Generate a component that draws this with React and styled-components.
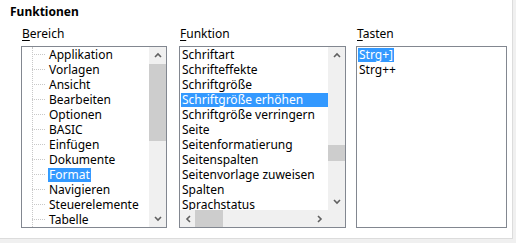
import React from 'react';
import styled, {createGlobalStyle} from 'styled-components';

const GlobalStyle = createGlobalStyle`
  html, body {
    margin: 0;
    padding: 0;
    background: #f0f0f0;
  }
  body {
    font-family: "Noto Sans", "Open Sans", sans-serif;
    font-size: 12px;
    color: #000;
  }
`;

const Panel = styled.div`
  width: 513px;
  height: 239px;
  box-sizing: border-box;
  background: #fff;
  border-right: 1px solid #dcdcdc;
  border-bottom: 1px solid #dcdcdc;
  padding: 4px 0 0 10px;
`;

const Title = styled.div`
  font-weight: bold;
  font-size: 12px;
  line-height: 16px;
`;

const Columns = styled.div`
  display: flex;
  margin: 6px 0 0 11px;
`;

const Column = styled.div`
  display: flex;
  flex-direction: column;
  width: ${p => p.width}px;
  margin-right: ${p => p.gap || 0}px;
`;

const Label = styled.div`
  line-height: 16px;
  height: 20px;
  padding-left: 1px;
  u {
    text-decoration: underline;
    text-underline-offset: 2px;
  }
`;

const Box = styled.div`
  height: 182px;
  box-sizing: border-box;
  border: 1px solid #828790;
  display: grid;
  grid-template-columns: 1fr ${p => p.vscroll ? '17px' : '0'};
  grid-template-rows: 1fr ${p => p.hscroll ? '17px' : '0'};
  overflow: hidden;
`;

const Items = styled.div`
  overflow: hidden;
  position: relative;
  padding-left: ${p => p.indent || 0}px;
`;

const Row = styled.div`
  height: 15px;
  line-height: 15px;
  white-space: nowrap;
  display: flex;
  align-items: center;
  position: relative;
`;

const ItemText = styled.span`
  background: ${p => p.selected ? '#3399ff' : 'transparent'};
  color: ${p => p.selected ? '#fff' : '#000'};
  padding: 0 1px;
  line-height: 14px;
  ${p => p.fill ? 'flex: 1;' : ''}
`;

const TreeLineV = styled.div`
  position: absolute;
  left: 10px;
  top: 0;
  bottom: 0;
  border-left: 1px dotted #c8c8c8;
`;

const TreeStub = styled.span`
  width: 13px;
  margin-left: 10px;
  margin-right: 3px;
  border-top: 1px dotted #c8c8c8;
`;

const VScroll = styled.div`
  background: #f0f0f0;
  display: flex;
  flex-direction: column;
`;

const HScroll = styled.div`
  background: #f0f0f0;
  display: flex;
  grid-column: 1;
`;

const Corner = styled.div`
  background: #f0f0f0;
`;

const Arrow = styled.div`
  width: 17px;
  height: 17px;
  flex: none;
  display: flex;
  align-items: center;
  justify-content: center;
`;

const Track = styled.div`
  flex: 1;
  position: relative;
`;

const Thumb = styled.div`
  position: absolute;
  background: #cdcdcd;
  ${p => p.horizontal
    ? `top: 0; bottom: 0; left: ${p.start}px; width: ${p.size}px;`
    : `left: 0; right: 0; top: ${p.start}px; height: ${p.size}px;`}
`;

const Chevron = ({dir}) => {
  const pts = {
    up: '1,5 4,2 7,5',
    down: '1,2 4,5 7,2',
    left: '5,1 2,4 5,7',
    right: '2,1 5,4 2,7'
  }[dir];
  const w = dir === 'up' || dir === 'down' ? 8 : 7;
  const h = dir === 'up' || dir === 'down' ? 7 : 8;
  return (
    <svg width={w} height={h} viewBox={`0 0 ${w} ${h}`}>
      <polyline points={pts} fill="none" stroke="#606060" strokeWidth="1.6"/>
    </svg>
  );
};

const bereich = ['Applikation', 'Vorlagen', 'Ansicht', 'Bearbeiten', 'Optionen', 'BASIC',
  'Einfügen', 'Dokumente', 'Format', 'Navigieren', 'Steuerelemente', 'Tabelle'];

const funktion = ['Schriftart', 'Schrifteffekte', 'Schriftgröße', 'Schriftgröße erhöhen',
  'Schriftgröße verringern', 'Seite', 'Seitenformatierung', 'Seitenspalten',
  'Seitenvorlage zuweisen', 'Spalten', 'Sprachstatus'];

const tasten = ['Strg+]', 'Strg++'];

const VerticalBar = ({start, size}) => (
  <VScroll>
    <Arrow><Chevron dir="up"/></Arrow>
    <Track><Thumb start={start} size={size}/></Track>
    <Arrow><Chevron dir="down"/></Arrow>
  </VScroll>
);

export default function App() {
  return (
    <>
      <GlobalStyle/>
      <Panel>
        <Title>Funktionen</Title>
        <Columns>
          <Column width={146} gap={12}>
            <Label><u>B</u>ereich</Label>
            <Box vscroll>
              <Items>
                <TreeLineV/>
                {bereich.map(b => (
                  <Row key={b}>
                    <TreeStub/>
                    <ItemText selected={b === 'Format'}>{b}</ItemText>
                  </Row>
                ))}
              </Items>
              <VerticalBar start={0} size={77}/>
            </Box>
          </Column>
          <Column width={167} gap={10}>
            <Label><u>F</u>unktion</Label>
            <Box vscroll hscroll>
              <Items indent={1}>
                {funktion.map(f => (
                  <Row key={f}>
                    <ItemText fill={f === 'Schriftgröße erhöhen'}
                              selected={f === 'Schriftgröße erhöhen'}>{f}</ItemText>
                  </Row>
                ))}
              </Items>
              <VerticalBar start={81} size={16}/>
              <HScroll>
                <Arrow><Chevron dir="left"/></Arrow>
                <Track><Thumb horizontal start={-2} size={28}/></Track>
                <Arrow><Chevron dir="right"/></Arrow>
              </HScroll>
              <Corner/>
            </Box>
          </Column>
          <Column width={151}>
            <Label><u>T</u>asten</Label>
            <Box>
              <Items indent={1}>
                {tasten.map(t => (
                  <Row key={t}>
                    <ItemText selected={t === 'Strg+]'}>{t}</ItemText>
                  </Row>
                ))}
              </Items>
            </Box>
          </Column>
        </Columns>
      </Panel>
    </>
  );
}
